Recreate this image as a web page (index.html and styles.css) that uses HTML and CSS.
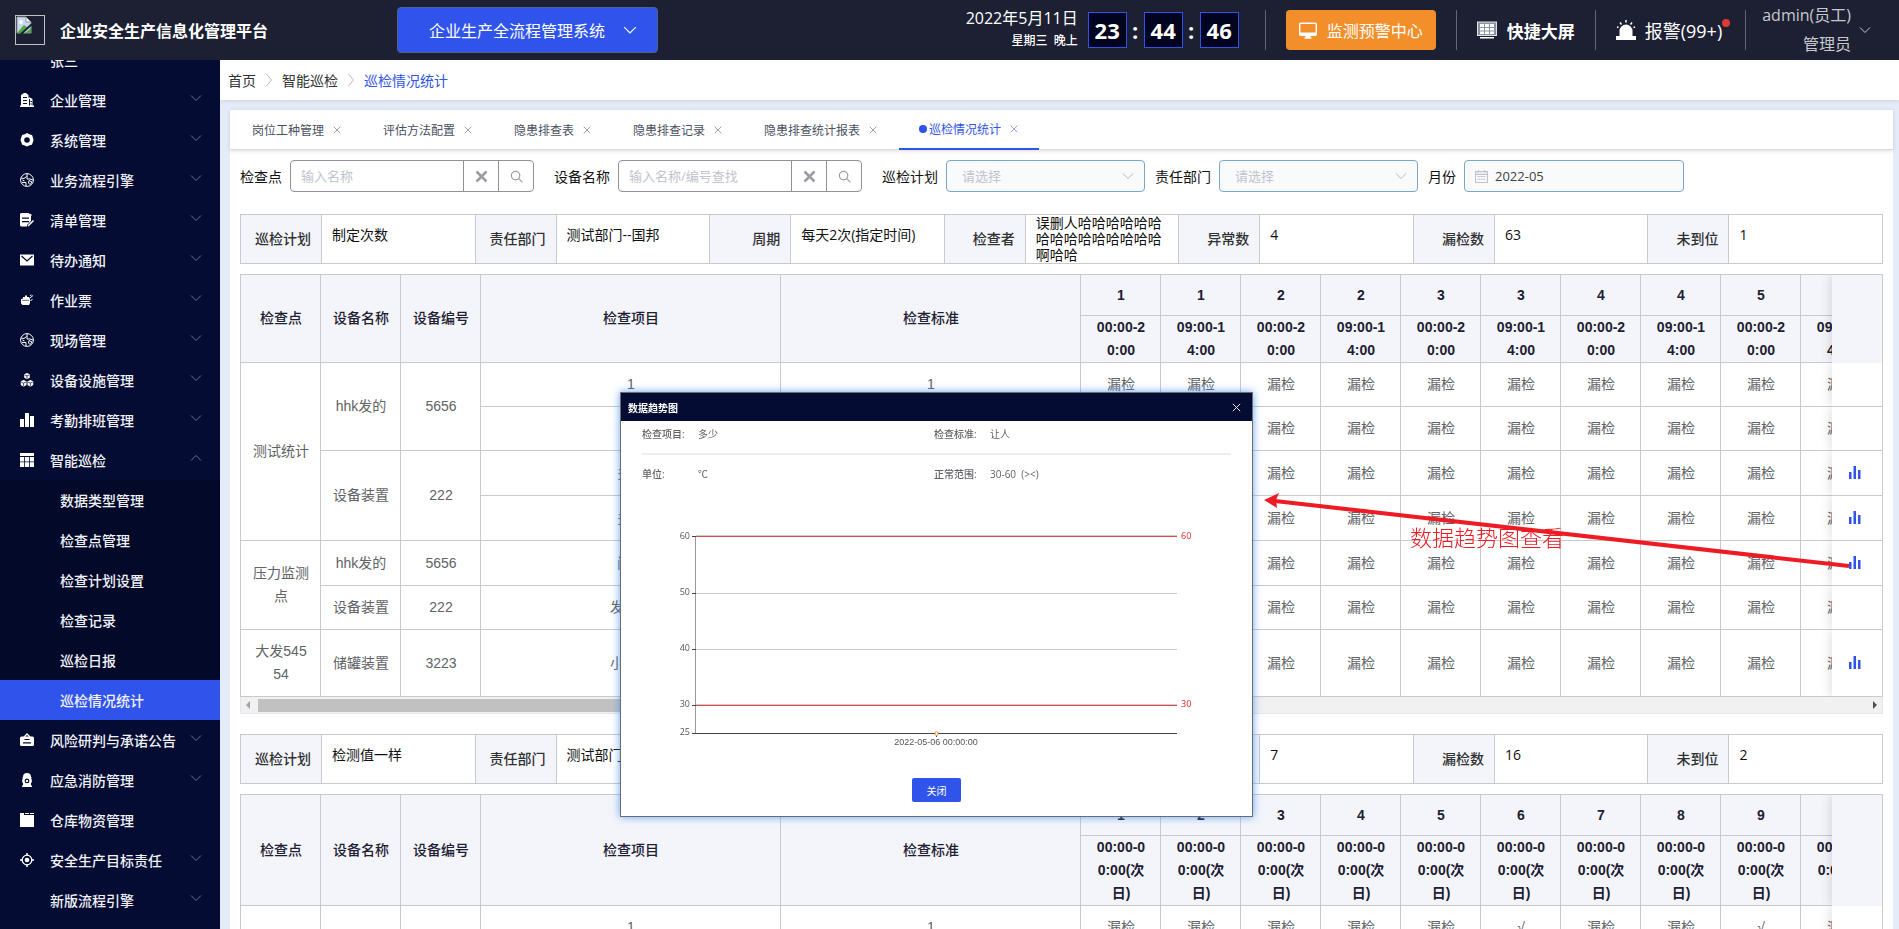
FILE: index.html
```html
<!DOCTYPE html>
<html lang="zh-CN">

<head>
    <meta charset="utf-8">
    <meta name="viewport" content="width=device-width, initial-scale=1">
    <title>企业安全生产信息化管理平台</title>
    <link rel="stylesheet" href="styles.css">
</head>

<body>
    <!-- Shared icons -->
    <svg class="sprite" aria-hidden="true">
        <symbol id="i-down" viewBox="0 0 12 12"><path d="M1 3.5l5 5 5-5" fill="none" stroke="currentColor"/></symbol>
        <symbol id="i-right" viewBox="0 0 8 14"><path d="M1.500 1l5 6-5 6" fill="none" stroke="currentColor"/></symbol>
        <symbol id="i-close" viewBox="0 0 12 12"><path d="M2 2l8 8M10 2l-8 8" fill="none" stroke="currentColor"/></symbol>
        <symbol id="i-search" viewBox="0 0 16 16"><circle cx="7" cy="7" r="4.500" fill="none" stroke="currentColor" stroke-width="1.300"/><path d="M10.300 10.300l4 4" stroke="currentColor" stroke-width="1.300"/></symbol>
        <symbol id="i-bars" viewBox="0 0 14 14"><path d="M0 6h4v8H0zM5 0h4v14H5zM10 3h4v11h-4z" fill="currentColor"/></symbol>
        <symbol id="i-trend" viewBox="0 0 12 14"><path d="M0 6h2.500v7H0zM4.500 0H7v13H4.500zM9 4h2.500v9H9z" fill="currentColor"/></symbol>
        <symbol id="i-building" viewBox="0 0 14 14"><path fill="currentColor" fill-rule="evenodd" d="M0 12.500h1V2L4 0h2l2.500 2v3l1-.7 3 1.700v6.500H14V14H0zM3 4v1h4V4zm0 3v1h4V7zm0 3v1h4v-1zm6-4v6.500h1V6zm1.500 2v1H12V8zm0 2.500v1H12v-1z"/></symbol>
        <symbol id="i-gear" viewBox="0 0 14 14"><path fill="currentColor" fill-rule="evenodd" d="M7 0l2.500 1.200 2.700 1L13 5l.5 2-.7 2.400-1 2.400-2.700.8L7 13.500 4.700 12.600l-2.500-.9L1.300 9.300.5 7l.7-2.500 1-2.400 2.700-.9zM7 4.200A2.800 2.800 0 107 9.800 2.800 2.800 0 007 4.200z"/></symbol>
        <symbol id="i-globe" viewBox="0 0 14 14"><circle cx="7" cy="7" r="6.400" fill="none" stroke="currentColor"/><path d="M7 .5v5.500h3l3.300 1M6.500 3.500L4 5.500 1 5M2 9.500h4V13M9 7.500l3 1.500-2 2.500L8.500 10zM2.500 7l2 1" fill="none" stroke="currentColor"/></symbol>
        <symbol id="i-list" viewBox="0 0 14 14"><path fill="currentColor" fill-rule="evenodd" d="M1 0h7.500L11 3v5l-4 4v1.500H1l-1-1V1zM2 4.500v1.300h7V4.500zM2 8v1.300h7V8z"/><path d="M8 13l5.500-5.500M9.500 1l2 1.500" stroke="currentColor" stroke-width="1.500"/></symbol>
        <symbol id="i-mail" viewBox="0 0 14 14"><path fill="currentColor" d="M0 1.500h14v11H0z"/><path d="M1.500 3L7 8l5.500-5" fill="none" stroke="#050c33" stroke-width="1.200"/></symbol>
        <symbol id="i-ticket" viewBox="0 0 14 14"><path fill="currentColor" d="M1 6h1.500L3 4h2V2.500h2V4h2l1 2v4l-1 2H2.500L1 10.500z"/><path d="M10 5l3-2.500M10 2.500L11.500 2M10.500 7.500l2-1M3 7.500h5" stroke="currentColor"/><path d="M2 7.300h7" stroke="#050c33" stroke-width=".6"/></symbol>
        <symbol id="i-cubes" viewBox="0 0 14 14"><path fill="currentColor" d="M7 0l2.800 1.200v3.600L7 6.200 4.200 4.800V1.200zM3.600 7l2.900 1.300V12l-2.900 1.700L.8 12V8.300zM10.400 7l2.800 1.300V12l-2.800 1.700L7.500 12V8.300z"/><path d="M4.500 1.800L7 2.900l2.500-1.100M7 2.900V6M1.200 9l2.400 1.100L6 9M3.600 10.100v3.200M8 9l2.400 1.100L12.800 9M10.400 10.100v3.200" fill="none" stroke="#050c33" stroke-width=".7"/></symbol>
        <symbol id="i-table" viewBox="0 0 14 14"><path fill="currentColor" d="M0 0h14v3H0zM0 4h4.200v4.500H0zM5 4h4v4.500H5zM9.800 4H14v4.500H9.800zM0 9.300h4.200V14H0zM5 9.300h4V14H5zM9.800 9.300H14V14H9.800z"/></symbol>
        <symbol id="i-notice" viewBox="0 0 14 14"><path d="M4 4l3-3 3 3" fill="none" stroke="currentColor" stroke-width="1.400"/><rect y="3.500" width="14" height="9.500" rx="1.500" fill="currentColor"/><path d="M4.500 6.500h5M3 9.800h8" stroke="#050c33" stroke-width="1.200"/></symbol>
        <symbol id="i-hydrant" viewBox="0 0 14 14"><path fill="currentColor" fill-rule="evenodd" d="M3 4a4 4 0 018 0h.5v1.300H11l.8 1.500v2.400L11 10v2.500h1V14H2v-1.500h1V10l-.8-.8V6.800L3 5.300h-.5V4zM7 5.500a2.400 2.400 0 100 4.800 2.400 2.400 0 000-4.800z"/><circle cx="7" cy="7.900" r="1.200" fill="currentColor"/></symbol>
        <symbol id="i-box" viewBox="0 0 14 14"><path fill="currentColor" d="M0 0h4v2h10v12H0z"/><path d="M5 .5h4M10 .5h4" stroke="currentColor"/></symbol>
        <symbol id="i-target" viewBox="0 0 14 14"><circle cx="7" cy="7" r="4.800" fill="none" stroke="currentColor" stroke-width="1.300"/><circle cx="7" cy="7" r="2.300" fill="currentColor"/><path d="M7 0v3M7 11v3M0 7h3M11 7h3" stroke="currentColor" stroke-width="1.500"/></symbol>
    </svg>

    <header class="header">
        <svg class="logo" viewBox="0 0 30 30" role="img" aria-label="logo">
            <rect x=".5" y=".5" width="29" height="29" fill="none" stroke="#c0c0c0"/>
            <path d="M2 2h9l5 5v11H2z" fill="#c6d8f5" stroke="#9a9a9a"/>
            <path d="M11 2v5h5z" fill="#fff" stroke="#9a9a9a"/>
            <circle cx="6" cy="7" r="2" fill="#fff"/>
            <path d="M2 18l7-8 3 2-6 6z" fill="#4fae3a"/>
            <path d="M10 18l6-5v5z" fill="#4fae3a"/>
            <path d="M6 19L17 9" stroke="#1c2032" stroke-width="2"/>
        </svg>
        <h1 class="title">企业安全生产信息化管理平台</h1>
        <button type="button" class="system-btn">企业生产全流程管理系统<svg class="ico-14"><use href="#i-down"/></svg></button>
        <div class="header-right">
            <div class="date">
                <div class="date-day">2022年5月11日</div>
                <div class="date-week">星期三&nbsp; 晚上</div>
            </div>
            <div class="clock"><b>23</b><i>:</i><b>44</b><i>:</i><b>46</b></div>
            <div class="header-item">
                <button type="button" class="warn-btn">
                    <svg width="18" height="17" viewBox="0 0 18 17"><rect x=".7" y="1.200" width="16.600" height="12" rx="1" fill="none" stroke="#fff" stroke-width="1.400"/><path d="M1 10.500h16v3H1zM6.500 13h5v2.500h-5zM5.500 15.300h7v1.400h-7z" fill="#fff"/></svg>
                    监测预警中心
                </button>
            </div>
            <a class="header-item screen" href="#">
                <svg width="20" height="18" viewBox="0 0 20 18"><rect x=".5" y="1" width="19" height="13.500" fill="#8d929e" stroke="#dfe2e8"/><path d="M3 3h4v3H3zM8 3h4v3H8zM13 3h4v3h-4zM3 7h4v2.500H3zM8 7h4v2.500H8zM13 7h4v2.500h-4zM3 10.500h4V13H3zM8 10.500h4V13H8zM13 10.500h4V13h-4zM3 16h14v1.500H3z" fill="#fff"/></svg>
                快捷大屏
            </a>
            <a class="header-item alarm" href="#">
                <svg width="20" height="20" viewBox="0 0 20 20"><path d="M3.500 16v-5a6.500 6.500 0 0113 0v5H20v4H0v-4z" fill="#fff"/><path d="M10 0v2.500M4 2.500l1.500 2M16 2.500l-1.500 2M1 7l1.500.5M19 7l-1.500.5" stroke="#fff" stroke-width="1.500"/></svg>
                <span class="badge-wrap">报警(99+)<span class="dot"></span></span>
            </a>
            <button type="button" class="header-item user">
                <span>admin(员工)<br>管理员</span>
                <svg class="ico-12"><use href="#i-down"/></svg>
            </button>
        </div>
    </header>

    <div class="page">
        <nav class="sidebar">
            <ul class="menu" id="menu"></ul>
        </nav>

        <main class="main">
            <div class="breadcrumb">
                <a href="#">首页</a><svg><use href="#i-right"/></svg>
                <a href="#">智能巡检</a><svg><use href="#i-right"/></svg>
                <a href="#" class="current">巡检情况统计</a>
            </div>

            <div class="card">
                <div class="tabs" id="tabs"></div>

                <form class="filters">
                    <label for="point">检查点</label>
                    <div class="search-box">
                        <input type="text" id="point" placeholder="输入名称">
                        <button type="button" aria-label="清空"><svg class="bold-x"><use href="#i-close"/></svg></button>
                        <button type="button" aria-label="搜索"><svg><use href="#i-search"/></svg></button>
                    </div>
                    <label for="device">设备名称</label>
                    <div class="search-box">
                        <input type="text" id="device" placeholder="输入名称/编号查找">
                        <button type="button" aria-label="清空"><svg class="bold-x"><use href="#i-close"/></svg></button>
                        <button type="button" aria-label="搜索"><svg><use href="#i-search"/></svg></button>
                    </div>
                    <label for="plan">巡检计划</label>
                    <div class="select-box">
                        <select id="plan"><option>请选择</option></select>
                        <svg><use href="#i-down"/></svg>
                    </div>
                    <label for="dept">责任部门</label>
                    <div class="select-box">
                        <select id="dept"><option>请选择</option></select>
                        <svg><use href="#i-down"/></svg>
                    </div>
                    <label for="month">月份</label>
                    <div class="month-box">
                        <svg viewBox="0 0 12 12"><path d="M.5 1.500h11v10H.5zM.5 4h11M3 0v2.500M9 0v2.500M2.500 6h2M5 6h2M7.500 6h2M2.500 8.500h2M5 8.500h2M7.500 8.500h2" fill="none" stroke="#c0c4cc"/></svg>
                        <input type="text" id="month" value="2022-05">
                    </div>
                </form>

                <div id="plans"></div>
            </div>
        </main>
    </div>

    <!-- Trend dialog -->
    <section class="dialog" role="dialog" aria-labelledby="dialogTitle">
        <div class="dialog-head">
            <h2 id="dialogTitle">数据趋势图</h2>
            <button type="button" aria-label="关闭窗口"><svg><use href="#i-close"/></svg></button>
        </div>
        <dl class="dialog-info">
            <div><dt>检查项目:</dt><dd>多少</dd></div>
            <div><dt>检查标准:</dt><dd>让人</dd></div>
        </dl>
        <dl class="dialog-info">
            <div><dt>单位:</dt><dd>℃</dd></div>
            <div><dt>正常范围:</dt><dd>30-60&nbsp; (&gt;&lt;)</dd></div>
        </dl>
        <svg class="chart" viewBox="0 0 631 260">
            <path d="M75 92.500h481M75 148.500h481M75 34.500h481M75 203.500h481" stroke="#ccc"/>
            <path d="M75 35.500h481M75 204.500h481" stroke="#e0484a"/>
            <path d="M74.500 35v198" stroke="#9a9a9a"/>
            <path d="M71 35.500h4M71 92.500h4M71 148.500h4M71 204.500h4M71 232.500h485M315.500 232v4" stroke="#444"/>
            <ellipse cx="315.500" cy="232.500" rx="1.500" ry="2" fill="#fff" stroke="#f28f2a"/>
            <g class="axis-y"><text x="69" y="38">60</text><text x="69" y="94">50</text><text x="69" y="150">40</text><text x="69" y="206">30</text><text x="69" y="234">25</text></g>
            <g class="limit"><text x="560" y="38">60</text><text x="560" y="206">30</text></g>
            <text class="axis-x" x="315" y="244">2022-05-06 00:00:00</text>
        </svg>
        <div class="dialog-foot"><button type="button">关闭</button></div>
    </section>

    <!-- Hint arrow from the trend icon to the dialog -->
    <svg class="hint-arrow" viewBox="0 0 590 80" aria-hidden="true">
        <path d="M12 8L586 73" stroke="#ed1c24" stroke-width="4"/>
        <path d="M1 7L16 0l-3 7 1 8z" fill="#ed1c24"/>
    </svg>
    <div class="hint-text">数据趋势图查看</div>

    <script>
        const menu = [
            ["", "张三", ""],
            ["building", "企业管理", "down"],
            ["gear", "系统管理", "down"],
            ["globe", "业务流程引擎", "down"],
            ["list", "清单管理", "down"],
            ["mail", "待办通知", "down"],
            ["ticket", "作业票", "down"],
            ["globe", "现场管理", "down"],
            ["cubes", "设备设施管理", "down"],
            ["bars", "考勤排班管理", "down"],
            ["table", "智能巡检", "up", ["数据类型管理", "检查点管理", "检查计划设置", "检查记录", "巡检日报", "巡检情况统计"]],
            ["notice", "风险研判与承诺公告", "down"],
            ["hydrant", "应急消防管理", "down"],
            ["box", "仓库物资管理", ""],
            ["target", "安全生产目标责任", "down"],
            ["", "新版流程引擎", "down"]
        ];

        document.getElementById("menu").innerHTML = menu.map(([icon, name, arrow, children]) => `
            <li><a href="#">
                <svg class="menu-icon">${icon ? `<use href="#i-${icon}"/>` : ""}</svg>
                <span>${name}</span>
                ${arrow ? `<svg class="menu-arrow ${arrow}"><use href="#i-down"/></svg>` : ""}
            </a>
            ${children ? `<ul class="submenu">${children.map(c => `<li><a href="#" class="${c === "巡检情况统计" ? "active" : ""}">${c}</a></li>`).join("")}</ul>` : ""}
            </li>`).join("");

        const tabs = ["岗位工种管理", "评估方法配置", "隐患排查表", "隐患排查记录", "隐患排查统计报表", "巡检情况统计"];
        document.getElementById("tabs").innerHTML = tabs.map((t, i) =>
            `<a href="#" class="tab${i === 5 ? " active" : ""}">${t}<svg><use href="#i-close"/></svg></a>`).join("");

        // Info row above each table
        function infoRow(values) {
            const labels = ["巡检计划", "责任部门", "周期", "检查者", "异常数", "漏检数", "未到位"];
            return `<dl class="info">${labels.map((l, i) =>
                `<div><dt>${l}</dt><dd class="${values[i].length > 12 ? "long" : ""}">${values[i]}</dd></div>`).join("")}</dl>`;
        }

        // Cells of a body row: [text, rowspan]
        function planTable(days, rows) {
            const head = ["检查点", "设备名称", "设备编号", "检查项目", "检查标准"];
            return `<div class="table-wrap"><table>
                <colgroup><col class="c-s"><col class="c-s"><col class="c-s"><col class="c-l"><col class="c-l">${days.map(() => `<col class="c-s">`).join("")}<col class="c-fix"></colgroup>
                <thead>
                    <tr>${head.map(h => `<th rowspan="2">${h}</th>`).join("")}${days.map(d => `<th class="day">${d[0]}</th>`).join("")}<th rowspan="2" class="fixed"></th></tr>
                    <tr>${days.map(d => `<th class="time">${d[1]}</th>`).join("")}</tr>
                </thead>
                <tbody>${rows.map(r => `<tr class="${r.trend ? "has-trend" : ""}">
                    ${r.cells.map(c => `<td rowspan="${c[1] || 1}">${c[0]}</td>`).join("")}
                    ${days.map((d, i) => `<td>${(r.done || []).includes(i) ? "√" : "漏检"}</td>`).join("")}
                    <td class="fixed">${r.trend ? `<button type="button" aria-label="趋势图"><svg><use href="#i-trend"/></svg></button>` : ""}</td>
                </tr>`).join("")}</tbody>
            </table></div>`;
        }

        const days1 = [], days2 = [];
        for (let d = 1; d <= 8; d++) {
            days1.push([d, "00:00-20:00"], [d, "09:00-14:00"]);
        }
        for (let d = 1; d <= 16; d++) {
            days2.push([d, "00:00-00:00(次日)"]);
        }

        const scrollbar = `<div class="scrollbar"><span class="arrow left"></span><span class="track"><span class="thumb"></span></span><span class="arrow right"></span></div>`;

        document.getElementById("plans").innerHTML =
            `<section class="plan">` +
            infoRow(["制定次数", "测试部门--国邦", "每天2次(指定时间)", "误删人哈哈哈哈哈哈哈哈哈哈哈哈哈哈哈啊哈哈", "4", "63", "1"]) +
            planTable(days1, [
                { cells: [["测试统计", 4], ["hhk发的", 2], ["5656", 2], ["1"], ["1"]] },
                { cells: [["1"], ["1"]] },
                { cells: [["设备装置", 2], ["222", 2], ["多少"], ["让人"]], trend: true },
                { cells: [["多少"], ["让人"]], trend: true },
                { cells: [["压力监测点", 2], ["hhk发的"], ["5656"], ["问题"], ["正常"]], trend: true },
                { cells: [["设备装置"], ["222"], ["发的发"], ["正常"]] },
                { cells: [["大发54554"], ["储罐装置"], ["3223"], ["小数点"], ["正常"]], trend: true }
            ]) + scrollbar + `</section>` +
            `<section class="plan">` +
            infoRow(["检测值一样", "测试部门--国邦", "每天1次", "误删人", "7", "16", "2"]) +
            planTable(days2, [
                { cells: [["", 2], ["", 2], ["", 2], ["1"], ["1"]], done: [5, 8] },
                { cells: [["1"], ["1"]] }
            ]) + `</section>`;
    </script>
</body>

</html>
```
FILE: styles.css
```css
* {
    box-sizing: border-box;
}

body {
    margin: 0;
    height: 100vh;
    display: flex;
    flex-direction: column;
    overflow: hidden;
    position: relative;
    background: #e5ecf8;
    color: #111;
    font-family: "Open Sans", "Noto Sans CJK SC", sans-serif;
    font-size: 14px;
}

a {
    color: inherit;
    text-decoration: none;
}

ul,
dl,
dd,
h1,
h2 {
    margin: 0;
    padding: 0;
    list-style: none;
}

button,
input,
select {
    font: inherit;
    color: inherit;
    border: 0;
    margin: 0;
    padding: 0;
    background: none;
}

button {
    cursor: pointer;
}

.sprite {
    position: absolute;
    width: 0;
    height: 0;
}

/* Header */
.header {
    height: 60px;
    flex: none;
    display: flex;
    align-items: center;
    background: #1c2032;
    color: #fff;
    padding: 0 20px 0 15px;
}

.logo {
    width: 30px;
    height: 30px;
}

.title {
    width: 337px;
    padding-left: 15px;
    font-size: 16px;
    font-weight: 700;
    white-space: nowrap;
}

.system-btn {
    display: flex;
    align-items: center;
    gap: 18px;
    height: 46px;
    margin-left: 15px;
    padding: 0 20px 0 31px;
    border: 1px solid #4a6394;
    border-radius: 4px;
    background: #3054eb;
    font-size: 16px;
}

.ico-14 {
    width: 14px;
    height: 14px;
}

.ico-12 {
    width: 12px;
    height: 12px;
}

.header-right {
    display: flex;
    align-items: center;
    margin-left: auto;
}

.date {
    text-align: right;
    margin-right: 10px;
}

.date-day {
    font-size: 16px;
    line-height: 22px;
}

.date-week {
    font-size: 12px;
    font-weight: 500;
    line-height: 24px;
}

.clock {
    display: flex;
    align-items: center;
    margin-right: 26px;
}

.clock b {
    width: 39px;
    height: 36px;
    line-height: 34px;
    border: 1px solid #3054eb;
    background: #01041f;
    font-size: 22px;
    text-align: center;
}

.clock i {
    width: 17px;
    font-size: 22px;
    font-style: normal;
    font-weight: 700;
    line-height: 32px;
    text-align: center;
}

.header-item {
    display: flex;
    align-items: center;
    height: 40px;
    padding: 0 20px;
    border-left: 1px solid #5d667c;
}

.warn-btn {
    display: flex;
    align-items: center;
    gap: 10px;
    height: 40px;
    padding: 0 13px;
    border-radius: 4px;
    background: #f28f2a;
    font-size: 16px;
}

.screen {
    gap: 10px;
    font-size: 17px;
    font-weight: 700;
}

.alarm {
    gap: 9px;
    padding-right: 23px;
    font-size: 18px;
}

.badge-wrap {
    position: relative;
}

.dot {
    position: absolute;
    top: 2px;
    right: -8px;
    width: 8px;
    height: 8px;
    border-radius: 50%;
    background: #dd3a35;
}

.user {
    gap: 8px;
    padding: 0 8px 0 16px;
    color: #c6c8ce;
    font-size: 16px;
    line-height: 29px;
    text-align: right;
}

/* Sidebar */
.page {
    flex: 1;
    display: flex;
    min-height: 0;
}

.sidebar {
    width: 220px;
    flex: none;
    overflow: hidden;
    background: #050c33;
    color: #f0f2f8;
    font-weight: 500;
}

.menu {
    margin-top: -20px;
}

.menu a {
    display: flex;
    align-items: center;
    height: 40px;
    padding: 0 18px 0 20px;
}

.menu-icon {
    width: 14px;
    height: 14px;
    margin-right: 16px;
    color: #fff;
}

.menu-arrow {
    width: 12px;
    height: 12px;
    margin: 0 0 4px auto;
    color: #6b7390;
}

.menu-arrow.up {
    transform: rotate(180deg);
}

.menu .submenu {
    background: #030928;
}

.menu .submenu a {
    padding-left: 60px;
}

.menu .submenu .active {
    background: #3054eb;
}

/* Main */
.main {
    flex: 1;
    min-width: 0;
    overflow: hidden;
}

.breadcrumb {
    display: flex;
    align-items: center;
    gap: 8px;
    height: 40px;
    padding: 0 8px;
    background: #fff;
    box-shadow: 0 1px 4px rgba(0, 21, 41, 0.12);
    color: #303133;
}

.breadcrumb svg {
    width: 10px;
    height: 14px;
    color: #b4b8c0;
}

.breadcrumb .current {
    color: #3054eb;
}

.card {
    margin: 10px 6px 0 10px;
    background: #fff;
}

.tabs {
    display: flex;
    gap: 1px;
    height: 40px;
    padding-left: 2px;
    border-bottom: 1px solid #d8dce5;
    box-shadow: 0 1px 4px rgba(0, 0, 0, 0.14);
}

.tab {
    display: flex;
    align-items: center;
    height: 40px;
    padding: 0 20px;
    font-size: 12px;
    color: #495060;
}

.tab svg {
    width: 10px;
    height: 10px;
    margin-left: 8px;
    color: #8a8f99;
}

.tab.active {
    color: #3054eb;
    border-bottom: 2px solid #3054eb;
}

.tab.active svg {
    color: #7d94f2;
}

.tab.active::before {
    content: "";
    width: 8px;
    height: 8px;
    margin-right: 2px;
    border-radius: 50%;
    background: #3054eb;
}

.filters {
    display: flex;
    align-items: center;
    padding: 10px 10px 22px;
}

.filters label {
    margin-right: 8px;
}

.search-box {
    display: flex;
    width: 244px;
    height: 32px;
    margin-right: 20px;
    border: 1px solid #8f9299;
    border-radius: 4px;
}

.search-box input {
    flex: 1;
    min-width: 0;
    padding: 0 10px;
    font-size: 13px;
}

.search-box button {
    display: flex;
    align-items: center;
    justify-content: center;
    width: 35px;
    border-left: 1px solid #8f9299;
    color: #999ca3;
}

.search-box svg {
    width: 15px;
    height: 15px;
}

.bold-x {
    stroke-width: 2;
}

::placeholder {
    color: #c0c4cc;
    opacity: 1;
}

.select-box {
    position: relative;
    width: 199px;
    margin-right: 10px;
}

.select-box select {
    width: 100%;
    height: 32px;
    padding: 0 15px;
    border: 1px solid #7ba6cc;
    border-radius: 4px;
    background: #f8fafc;
    color: #c0c4cc;
    font-size: 13px;
    appearance: none;
}

.select-box svg {
    position: absolute;
    top: 10px;
    right: 11px;
    width: 12px;
    height: 12px;
    color: #b4b8c0;
    pointer-events: none;
}

.month-box {
    display: flex;
    align-items: center;
    width: 220px;
    height: 32px;
    padding-left: 10px;
    border: 1px solid #7ba6cc;
    border-radius: 4px;
    background: #f8fafc;
    color: #404246;
}

.month-box svg {
    width: 13px;
    height: 13px;
    margin-right: 7px;
}

.month-box input {
    flex: 1;
    min-width: 0;
    font-size: 13px;
}

/* Plans */
.plan {
    margin: 0 10px 20px;
}

.info {
    display: flex;
    height: 50px;
    margin-bottom: 10px;
    border: 1px solid #c8cacd;
    border-left: 0;
}

.info div {
    flex: 1;
    display: flex;
    min-width: 0;
    border-left: 1px solid #c8cacd;
}

.info dt {
    flex: none;
    width: 81px;
    padding-right: 10px;
    border-right: 1px solid #c8cacd;
    background: #f4f5fa;
    color: #303133;
    font-weight: 500;
    line-height: 48px;
    text-align: right;
}

.info dd {
    flex: 1;
    min-width: 0;
    padding: 12px 10px 0;
    line-height: 16px;
}

.info .long {
    padding-top: 0;
}

.table-wrap {
    overflow: hidden;
    border: 1px solid #c8cacd;
    border-bottom: 0;
    font-family: "Liberation Sans", "Noto Sans CJK SC", sans-serif;
}

table {
    width: 100%;
    table-layout: fixed;
    border-collapse: separate;
    border-spacing: 0;
    color: #606266;
}

.c-s {
    width: 80px;
}

.c-l {
    width: 300px;
}

.c-fix {
    width: 50px;
}

th,
td {
    padding: 10px 11px 10px 12px;
    border-right: 1px solid #c8cacd;
    border-bottom: 1px solid #c8cacd;
    line-height: 23px;
    text-align: center;
    word-break: break-all;
}

th {
    background: #f4f5fa;
    color: #1c2032;
    font-weight: 700;
}

th[rowspan] {
    font-weight: 500;
}

th.day {
    padding-top: 9px;
    padding-bottom: 8px;
    height: 41px;
}

th.time {
    padding-top: 0;
    padding-bottom: 0;
}

.has-trend td {
    height: 45px;
}

.fixed {
    position: sticky;
    right: 0;
    padding: 0;
    border-right: 0;
    background: #fff;
    box-shadow: -2px 0 10px rgba(0, 0, 0, 0.12);
    clip-path: inset(0 0 0 -12px);
}

th.fixed {
    background: #f4f5fa;
    border-bottom-color: #f4f5fa;
}

.fixed button {
    display: block;
    margin-left: 17px;
    color: #3054eb;
}

.fixed svg {
    display: block;
    width: 12px;
    height: 14px;
}

.scrollbar {
    display: flex;
    align-items: center;
    height: 17px;
    padding: 0 5px;
    border: 1px solid #e3e6f0;
    border-top: 0;
    background: #f1f1f1;
}

.track {
    flex: 1;
    height: 13px;
    margin: 0 8px;
}

.thumb {
    display: block;
    width: 60%;
    height: 13px;
    background: #c1c1c1;
}

.arrow {
    border: 4px solid transparent;
}

.arrow.left {
    border-left: 0;
    border-right-color: #a3a3a3;
}

.arrow.right {
    border-right: 0;
    border-left-color: #505050;
}

/* Trend dialog */
.dialog {
    position: absolute;
    top: 392px;
    left: 620px;
    width: 633px;
    height: 425px;
    border: 1px solid #6c6c6c;
    background: #fff;
    box-shadow: 0 0 8px rgba(60, 140, 245, 0.8);
    color: #606266;
    font-size: 10px;
}

.dialog-head {
    display: flex;
    align-items: center;
    justify-content: space-between;
    height: 28px;
    padding: 0 10px 0 7px;
    background: #050c33;
    color: #fff;
}

.dialog-head h2 {
    font-size: 10px;
    font-weight: 700;
}

.dialog-head svg {
    display: block;
    width: 11px;
    height: 11px;
}

.dialog-info {
    display: flex;
    height: 40px;
    margin: 0 21px;
    line-height: 26px;
}

.dialog-info:nth-of-type(1) {
    height: 34px;
    border-bottom: 2px solid #ededed;
}

.dialog-info:nth-of-type(2) {
    padding-top: 6px;
}

.dialog-info div {
    display: flex;
    width: 292px;
}

.dialog-info dt {
    width: 56px;
    font-weight: 500;
}

.chart {
    display: block;
    width: 100%;
    height: 260px;
    margin-top: 6px;
    font-size: 9px;
    fill: #555;
}

.axis-y {
    text-anchor: end;
}

.axis-x {
    text-anchor: middle;
    font-family: "Liberation Sans", sans-serif;
}

.limit {
    fill: #e0282a;
}

.dialog-foot {
    display: flex;
    justify-content: center;
    margin-top: 17px;
}

.dialog-foot button {
    width: 49px;
    height: 24px;
    border-radius: 2px;
    background: #3054eb;
    color: #fff;
}

.hint-arrow {
    position: absolute;
    top: 493px;
    left: 1263px;
    width: 590px;
    height: 80px;
    pointer-events: none;
}

.hint-text {
    position: absolute;
    top: 522px;
    left: 1410px;
    color: #ed1c24;
    font-size: 22px;
    font-weight: 300;
    line-height: 30px;
    pointer-events: none;
}
```
